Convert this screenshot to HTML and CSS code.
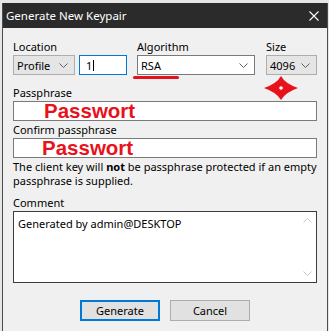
FILE: index.html
```html
<!DOCTYPE html>
<html>
<head>
    <meta charset="utf-8">
    <title>Generate New Keypair</title>
    <link rel="stylesheet" href="styles.css">
</head>
<body>
    <div class="desk">
        <div class="dialog">
            <div class="titlebar">
                <span class="title">Generate New Keypair</span>
                <svg class="close" width="10" height="10" viewBox="0 0 10 10">
                    <path d="M0.5 0.5 L9.5 9.5 M9.5 0.5 L0.5 9.5" stroke="#fff" stroke-width="1.1" fill="none" />
                </svg>
            </div>
            <div class="content">
                <div class="keyrow">
                    <span class="lbl c1">Location</span>
                    <span class="lbl c5">Algorithm</span>
                    <span class="lbl c7">Size</span>
                    <div class="combo grey c1">
                        <span>Profile</span>
                        <svg class="chev" width="9" height="5" viewBox="0 0 9 5"><path d="M0.5 0.5 L4.5 4.5 L8.5 0.5" stroke="#606060" fill="none" /></svg>
                    </div>
                    <div class="edit focus c3"><span>1</span><span class="cursor"></span></div>
                    <div class="combo white c5">
                        <span>RSA</span>
                        <svg class="chev" width="9" height="5" viewBox="0 0 9 5"><path d="M0.5 0.5 L4.5 4.5 L8.5 0.5" stroke="#606060" fill="none" /></svg>
                    </div>
                    <div class="combo grey c7">
                        <span>4096</span>
                        <svg class="chev" width="9" height="5" viewBox="0 0 9 5"><path d="M0.5 0.5 L4.5 4.5 L8.5 0.5" stroke="#606060" fill="none" /></svg>
                    </div>
                </div>

                <span class="lbl pass-lbl">Passphrase</span>
                <div class="edit wide"><span class="pw">Passwort</span></div>
                <span class="lbl confirm-lbl">Confirm passphrase</span>
                <div class="edit wide"><span class="pw pw2">Passwort</span></div>

                <p class="note">The client key will <b>not</b> be passphrase protected if an empty<br>passphrase is supplied.</p>

                <span class="lbl comment-lbl">Comment</span>
                <div class="memo">
                    <span>Generated by admin@DESKTOP</span>
                    <div class="scroll">
                        <svg width="9" height="5" viewBox="0 0 9 5"><path d="M0.5 4.5 L4.5 0.5 L8.5 4.5" stroke="#c8c8c8" fill="none" /></svg>
                        <svg width="9" height="5" viewBox="0 0 9 5"><path d="M0.5 0.5 L4.5 4.5 L8.5 0.5" stroke="#c8c8c8" fill="none" /></svg>
                    </div>
                </div>

                <div class="buttons">
                    <a class="btn default">Generate</a>
                    <a class="btn">Cancel</a>
                </div>

                <span class="mark-line"></span>
                <svg class="mark-star" width="36" height="26" viewBox="-18 -13 36 26">
                    <path d="M0 -12 Q4 -4.5 17 0 Q4 4.5 0 12 Q-4 4.5 -17 0 Q-4 -4.5 0 -12 Z" fill="#e8121c" />
                    <circle cx="0" cy="0" r="1.8" fill="#fff" />
                </svg>
            </div>
        </div>
    </div>
</body>
</html>
```

FILE: styles.css
```css
* {
    margin: 0;
    padding: 0;
    box-sizing: border-box;
}

body {
    width: 329px;
    height: 331px;
    overflow: hidden;
    background: #e6e6e6;
    font: 11px "Noto Sans", sans-serif;
    color: #000;
}

.desk {
    padding: 3px 1px 0 2px;
    height: 331px;
}

.dialog {
    height: 328px;
    background: #f0f0f0;
    border-left: 1px solid #4d4d4d;
    border-right: 1px solid #4d4d4d;
}

.titlebar {
    height: 25px;
    background: #2b2b2b;
    color: #fff;
    font-size: 11.5px;
    display: flex;
    align-items: center;
    justify-content: space-between;
    padding: 0 8px 0 3px;
}

.content {
    position: relative;
    padding: 11px 10px 0 10px;
}

.lbl {
    display: block;
    height: 16px;
    line-height: 15px;
}

.keyrow {
    display: grid;
    grid-template-columns: 62px 4px 48px 10px 118px 11px 51px;
    grid-template-rows: 16px 20px;
}

.c1 { grid-column: 1; }
.c3 { grid-column: 3; grid-row: 2; }
.c5 { grid-column: 5; }
.c7 { grid-column: 7; }

.combo {
    grid-row: 2;
    height: 20px;
    display: flex;
    align-items: center;
    justify-content: space-between;
    padding: 0 6px 0 3px;
}

.combo.grey {
    background: #e5e5e5;
    border: 1px solid #adadad;
}

.combo.white {
    background: #fff;
    border: 1px solid #7a7a7a;
}

.edit {
    height: 20px;
    background: #fff;
    border: 1px solid #7a7a7a;
    display: flex;
    align-items: center;
    padding-left: 6px;
}

.edit.focus {
    border-color: #0078d7;
}

.cursor {
    width: 1px;
    height: 11px;
    background: #000;
    margin-left: 1px;
}

.pass-lbl {
    margin-top: 10px;
}

.confirm-lbl {
    margin-top: 1px;
}

.pw {
    font: bold 20.5px/12px "Liberation Sans", Arial, sans-serif;
    color: #e8121c;
    margin-left: 24px;
}

.pw2 {
    margin-left: 22px;
}

.note {
    margin-top: 2px;
    line-height: 14px;
    height: 28px;
}

.comment-lbl {
    margin-top: 7px;
}

.memo {
    height: 72px;
    background: #fff;
    border: 1px solid #3c3c3c;
    display: flex;
    justify-content: space-between;
    padding: 4px 0 0 4px;
}

.scroll {
    width: 17px;
    display: flex;
    flex-direction: column;
    justify-content: space-between;
    align-items: center;
    padding: 6px 0 6px;
    margin-top: -4px;
}

.buttons {
    display: flex;
    justify-content: center;
    gap: 10px;
    margin-top: 17px;
}

.btn {
    width: 80px;
    height: 21px;
    background: #e1e1e1;
    border: 1px solid #adadad;
    text-align: center;
    line-height: 19px;
}

.btn.default {
    border: 2px solid #0078d7;
    line-height: 17px;
}

.mark-line {
    position: absolute;
    left: 130px;
    top: 48px;
    width: 46px;
    height: 3px;
    border-radius: 2px;
    background: #e8121c;
}

.mark-star {
    position: absolute;
    left: 260px;
    top: 47px;
}
```
